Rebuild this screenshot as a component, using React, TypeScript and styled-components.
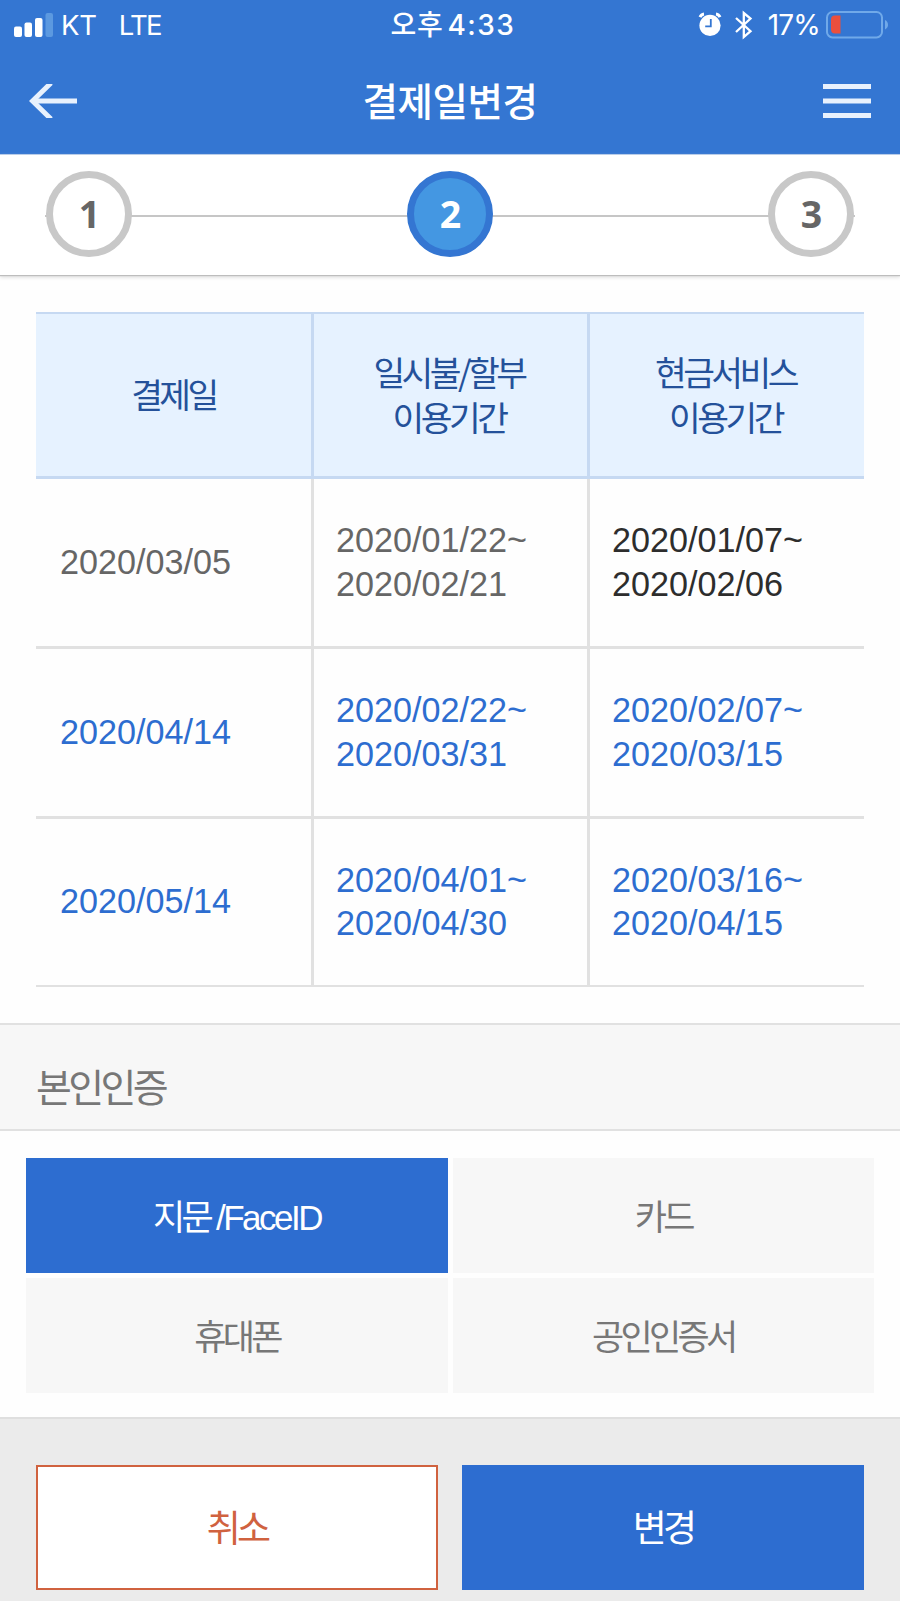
import React from "react";
import styled, { createGlobalStyle } from "styled-components";

const GlobalStyle = createGlobalStyle`
  *, *::before, *::after { box-sizing: border-box; }
  body { margin: 0; background: #fff; }
  button { border: 0; padding: 0; background: none; font: inherit; color: inherit; }
`;

const korean = `"Liberation Sans", "Noto Sans CJK KR", sans-serif`;
const system = `Inter, "Noto Sans CJK KR", sans-serif`;

const Screen = styled.main`
  width: 900px;
  height: 1601px;
  overflow: hidden;
  display: flex;
  flex-direction: column;
  background: #fefefe;
  font-family: ${korean};
`;

const Top = styled.header`
  flex: none;
  height: 155px;
  background: #3476d2;
  border-bottom: 1px solid #b5cbeb;
  color: #fff;
`;

const StatusBar = styled.div`
  height: 50px;
  display: grid;
  grid-template-columns: 1fr auto 1fr;
  align-items: center;
  padding: 0 14px;
  font-family: ${system};
  font-size: 27.5px;
  line-height: 50px;
`;

const StatusGroup = styled.div<{ $end?: boolean }>`
  display: flex;
  align-items: center;
  justify-content: ${(p) => (p.$end ? "flex-end" : "flex-start")};
  font-weight: 400;
`;

const Carrier = styled.span`
  margin-left: 7px;
  letter-spacing: -0.2px;
`;

const Network = styled.span`
  margin-left: 22px;
  letter-spacing: -1.8px;
`;

const Clock = styled.time`
  font-weight: 500;
  font-size: 28px;
  letter-spacing: 0.6px;
  word-spacing: -4px;
  padding-left: 6px;
`;

const Digits = styled.span`
  letter-spacing: 1.5px;
`;

const Percent = styled.span`
  margin: 0 6px 0 15px;
  font-weight: 400;
  font-size: 28px;
  letter-spacing: -0.8px;
`;

const Bluetooth = styled.span`
  display: flex;
  margin-left: 13px;
`;

const Battery = styled.span`
  display: flex;
  margin-right: -3px;
`;

const TitleBar = styled.div`
  height: 102px;
  display: grid;
  grid-template-columns: 1fr auto 1fr;
  align-items: center;
  padding: 0 29px;
`;

const Title = styled.h1`
  margin: 0;
  padding-bottom: 3px;
  font: 500 38.5px/99px "Noto Sans CJK KR", sans-serif;
  letter-spacing: -0.4px;
`;

const IconButton = styled.button<{ $end?: boolean }>`
  justify-self: ${(p) => (p.$end ? "end" : "start")};
  display: flex;
`;

const Steps = styled.ol`
  flex: none;
  list-style: none;
  margin: 0;
  height: 120px;
  padding: 16px 46px 0;
  display: flex;
  align-items: flex-start;
  justify-content: space-between;
  background: linear-gradient(#c6c6c6, #c6c6c6) 45px 60px / 810px 2px no-repeat, #fff;
  box-shadow: 0 1px 1px #bdbdbd, 0 2px 4px #d8d8d8;
`;

const Step = styled.li<{ $active?: boolean }>`
  width: 86px;
  height: 86px;
  border-radius: 50%;
  border: 7px solid ${(p) => (p.$active ? "#3476d2" : "#c8c8c8")};
  background: ${(p) => (p.$active ? "#4497e2" : "#fff")};
  color: ${(p) => (p.$active ? "#fff" : "#666")};
  font: 700 37.5px/72px "Noto Sans", sans-serif;
  text-align: center;
  text-indent: 1px;
`;

const Schedule = styled.table`
  flex: none;
  width: 828px;
  margin: 37px 36px 0;
  table-layout: fixed;
  border-collapse: separate;
  border-spacing: 0;
`;

const Column = styled.col<{ $width: number }>`
  width: ${(p) => p.$width}px;
`;

const HeadCell = styled.th`
  height: 167px;
  padding: 0 0 2px;
  background: #e6f2ff;
  border-top: 2px solid #c6d9f2;
  border-bottom: 3px solid #c6d9f2;
  color: #24519a;
  font-family: "Noto Sans CJK KR", sans-serif;
  font-weight: 400;
  font-size: 34.5px;
  line-height: 45.5px;
  letter-spacing: -3.5px;
  text-align: center;
  vertical-align: middle;

  & + & { border-left: 3px solid #c6d9f2; padding-right: 3px; }
`;

type Tone = "muted" | "dark" | "blue";
const tones: Record<Tone, string> = { muted: "#666", dark: "#2d2d2d", blue: "#2d6dd0" };

const DateCell = styled.td<{ $tone: Tone }>`
  height: 170px;
  padding: 0 0 0 24px;
  border-bottom: 3px solid #e1e1e1;
  color: ${(p) => tones[p.$tone]};
  font-size: 34.2px;
  line-height: 43.3px;
  vertical-align: middle;

  & + & { border-left: 3px solid #e1e1e1; padding-left: 22px; }
  tr:last-child > & { border-bottom-width: 2px; height: 168px; }
`;

const Line = styled.div``;

const SectionTitle = styled.h2`
  flex: none;
  height: 108px;
  margin: 36px 0 0;
  padding: 19px 36px 0;
  background: #f7f7f7;
  border-top: 2px solid #e1e1e1;
  border-bottom: 2px solid #e1e1e1;
  color: #777;
  font-size: 39px;
  font-weight: 400;
  line-height: 90px;
  letter-spacing: -3.6px;
`;

const Methods = styled.div`
  flex: none;
  display: grid;
  grid-template-columns: 422px 420.5px;
  grid-template-rows: 115px 115px;
  gap: 5px;
  padding: 27px 26px 24px;
`;

const Method = styled.button<{ $selected?: boolean }>`
  padding-bottom: 2px;
  background: ${(p) => (p.$selected ? "#2d6dd0" : "#f7f7f7")};
  color: ${(p) => (p.$selected ? "#fff" : "#777")};
  font-size: 35px;
  font-weight: 400;
  letter-spacing: -3.7px;
`;

const Latin = styled.span`
  letter-spacing: -2.5px;
`;

const Footer = styled.footer`
  flex: 1;
  display: flex;
  justify-content: space-between;
  align-items: flex-start;
  padding: 46px 36px 0;
  background: #ebebeb;
  border-top: 2px solid #dfdfdf;
`;

const Action = styled.button<{ $primary?: boolean }>`
  width: 402px;
  height: 125px;
  padding-bottom: 4px;
  background: ${(p) => (p.$primary ? "#2d6dd0" : "#fff")};
  border: 2px solid ${(p) => (p.$primary ? "#2d6dd0" : "#d0623f")};
  color: ${(p) => (p.$primary ? "#fff" : "#d0623f")};
  font-size: 37px;
  letter-spacing: -3.7px;
`;

const SignalIcon = () => (
  <svg width="40" height="26" viewBox="0 0 40 26" fill="#fff">
    <rect x="0" y="14.5" width="8" height="10.5" rx="2" />
    <rect x="10.5" y="10.5" width="7.5" height="14.5" rx="2" />
    <rect x="21" y="6" width="7.5" height="19" rx="2" />
    <rect x="31.5" y="1" width="7.5" height="24" rx="2" fill="#5c99e0" />
  </svg>
);

const AlarmIcon = () => (
  <svg width="24" height="28" viewBox="0 0 24 28">
    <circle cx="12" cy="14.4" r="10.6" fill="#fff" />
    <path d="M2 6.2Q3.2 3.4 6 3.1M22 6.2Q20.8 3.4 18 3.1" stroke="#fff" strokeWidth="3" fill="none" />
    <path d="M12.8 8v7.3H7.2" stroke="#3476d2" strokeWidth="1.8" fill="none" />
  </svg>
);

const BluetoothIcon = () => (
  <svg width="18" height="30" viewBox="0 0 18 30" fill="none" stroke="#fff" strokeWidth="2.3">
    <path d="M1 8 15.5 21.2 8.8 27V3l6.7 5.6L1 22" />
  </svg>
);

const BatteryIcon = () => (
  <svg width="63" height="28" viewBox="0 0 63 28">
    <rect x="1" y="1" width="55" height="25.4" rx="5.5" fill="none" stroke="#70a9e9" strokeWidth="2" />
    <path d="M9 4.5h5.5v18H9q-4 0-4-4v-10q0-4 4-4Z" fill="#ea4f3d" />
    <path d="M59 9q3 1.5 3 4.7T59 18.4Z" fill="#70a9e9" />
  </svg>
);

const BackIcon = () => (
  <svg width="48" height="34" viewBox="0 0 48 34" fill="none" stroke="#e8f1fd" strokeWidth="5">
    <path d="M3 17H48" />
    <path d="M22 -1 3.5 17 22 35" />
  </svg>
);

const MenuIcon = () => (
  <svg width="48" height="34" viewBox="0 0 48 34" fill="#e8f1fd">
    <rect width="48" height="5" />
    <rect y="14.5" width="48" height="5" />
    <rect y="29" width="48" height="5" />
  </svg>
);

const rows: { tones: Tone[]; cells: string[][] }[] = [
  { tones: ["muted", "muted", "dark"], cells: [["2020/03/05"], ["2020/01/22~", "2020/02/21"], ["2020/01/07~", "2020/02/06"]] },
  { tones: ["blue", "blue", "blue"], cells: [["2020/04/14"], ["2020/02/22~", "2020/03/31"], ["2020/02/07~", "2020/03/15"]] },
  { tones: ["blue", "blue", "blue"], cells: [["2020/05/14"], ["2020/04/01~", "2020/04/30"], ["2020/03/16~", "2020/04/15"]] },
];

export default function App() {
  return (
    <Screen>
      <GlobalStyle />
      <Top>
        <StatusBar>
          <StatusGroup>
            <SignalIcon />
            <Carrier>KT</Carrier>
            <Network>LTE</Network>
          </StatusGroup>
          <Clock>오후 <Digits>4:33</Digits></Clock>
          <StatusGroup $end>
            <AlarmIcon />
            <Bluetooth><BluetoothIcon /></Bluetooth>
            <Percent>17%</Percent>
            <Battery><BatteryIcon /></Battery>
          </StatusGroup>
        </StatusBar>
        <TitleBar>
          <IconButton aria-label="뒤로"><BackIcon /></IconButton>
          <Title>결제일변경</Title>
          <IconButton $end aria-label="메뉴"><MenuIcon /></IconButton>
        </TitleBar>
      </Top>
      <Steps>
        <Step>1</Step>
        <Step $active>2</Step>
        <Step>3</Step>
      </Steps>
      <Schedule>
        <colgroup>
          <Column $width={275} />
          <Column $width={276} />
          <Column $width={277} />
        </colgroup>
        <thead>
          <tr>
            <HeadCell>결제일</HeadCell>
            <HeadCell>일시불/할부<br />이용기간</HeadCell>
            <HeadCell>현금서비스<br />이용기간</HeadCell>
          </tr>
        </thead>
        <tbody>
          {rows.map((row, r) => (
            <tr key={r}>
              {row.cells.map((lines, c) => (
                <DateCell key={c} $tone={row.tones[c]}>
                  {lines.map((line) => <Line key={line}>{line}</Line>)}
                </DateCell>
              ))}
            </tr>
          ))}
        </tbody>
      </Schedule>
      <SectionTitle>본인인증</SectionTitle>
      <Methods>
        <Method $selected>지문 <Latin>/FaceID</Latin></Method>
        <Method>카드</Method>
        <Method>휴대폰</Method>
        <Method>공인인증서</Method>
      </Methods>
      <Footer>
        <Action>취소</Action>
        <Action $primary>변경</Action>
      </Footer>
    </Screen>
  );
}
